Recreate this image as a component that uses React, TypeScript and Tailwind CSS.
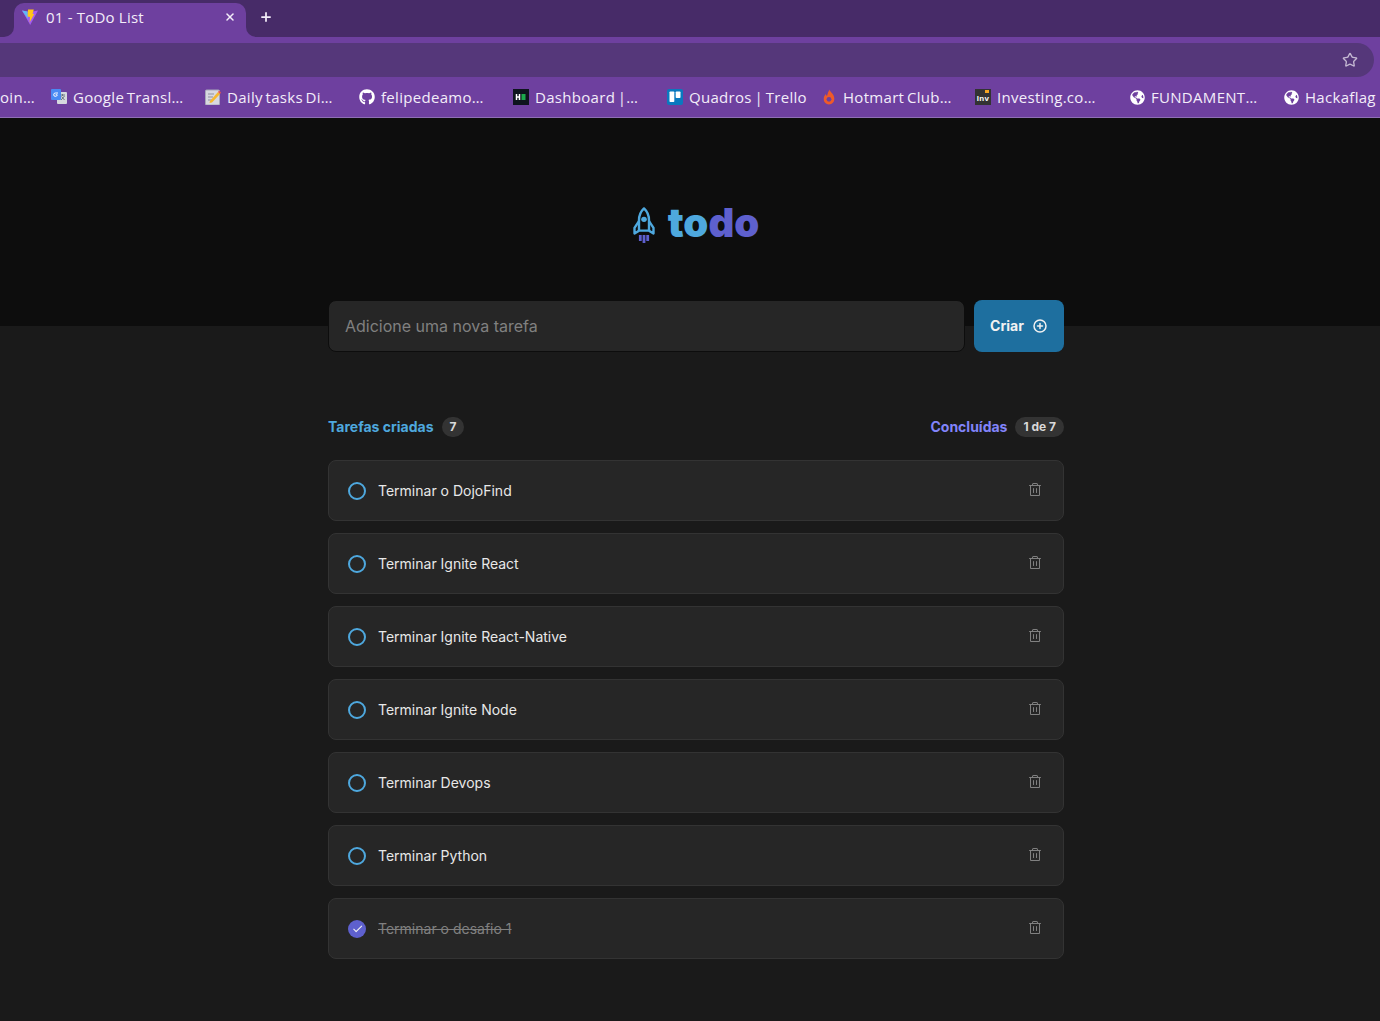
import { FaGithub, FaGlobeAmericas } from "react-icons/fa";
import { PiCheckBold, PiPlusCircleBold, PiTrash } from "react-icons/pi";
import { Star, Plus, X } from "lucide-react";

const tasks = [
  { title: "Terminar o DojoFind", done: false },
  { title: "Terminar Ignite React", done: false },
  { title: "Terminar Ignite React-Native", done: false },
  { title: "Terminar Ignite Node", done: false },
  { title: "Terminar Devops", done: false },
  { title: "Terminar Python", done: false },
  { title: "Terminar o desafio 1", done: true },
];

function ViteIcon() {
  return (
    <svg width="16" height="16" viewBox="0 0 16 16">
      <path d="M0 1.500 L8 3 L16 1.500 L8.200 16 Z" fill="#a45cf0" />
      <path d="M0 1.500 L5.500 2.500 L6 10 Z" fill="#5fb8f5" />
      <path d="M6 0.500 L11.800 0.500 L10.600 5 L12.200 5 L7.600 13.500 L8 8 L5.600 7.600 Z" fill="#ffc517" />
    </svg>
  );
}

function TranslateIcon() {
  return (
    <svg width="16" height="16" viewBox="0 0 16 16">
      <rect x="6" y="3" width="10" height="12" rx="1" fill="#d5d9de" />
      <path d="M9 6h5M11.500 5v2M10 11l3.500-4M10.500 7.500l3 3.500" stroke="#6b7280" strokeWidth="1" fill="none" />
      <rect x="0" y="0" width="10" height="11" rx="1" fill="#4a8af4" />
      <path d="M7 4H4.400a1.600 1.600 0 1 0 0 3.400c1 0 1.800-.5 1.800-1.600H4.600" stroke="#fff" strokeWidth="1" fill="none" />
    </svg>
  );
}

function NoteIcon() {
  return (
    <svg width="16" height="16" viewBox="0 0 16 16">
      <rect x="0.500" y="1" width="14" height="15" rx="1" fill="#d8d8e0" stroke="#a7a7b8" />
      <path d="M3 5h6M3 8h5M3 11h4" stroke="#8f8fa0" strokeWidth="1" />
      <path d="M5 12 L13 3 L15 5 L7 13.500 L4.500 14 Z" fill="#f5b82e" />
      <path d="M13 3 L14 1.500 L16 3.500 L15 5 Z" fill="#e4564e" />
    </svg>
  );
}

function HackIcon() {
  return (
    <svg width="16" height="16" viewBox="0 0 16 16">
      <rect width="16" height="16" fill="#0e141e" />
      <path d="M3.500 5v6M6.500 5v6M3.500 8h3" stroke="#fff" strokeWidth="1.500" />
      <rect x="8.500" y="5" width="4" height="6" fill="#1ba94c" />
    </svg>
  );
}

function TrelloIcon() {
  return (
    <svg width="16" height="16" viewBox="0 0 16 16">
      <rect width="16" height="16" rx="2" fill="#0a79bf" />
      <rect x="2.500" y="2.500" width="4.800" height="10.500" rx="0.800" fill="#fff" />
      <rect x="8.700" y="2.500" width="4.800" height="6.500" rx="0.800" fill="#fff" />
    </svg>
  );
}

function HotmartIcon() {
  return (
    <svg width="16" height="16" viewBox="0 0 16 16">
      <path d="M8.500 0.500c.3 2.400 4.800 4.300 4.800 9.200A5.400 5.400 0 0 1 8 15.500a5.400 5.400 0 0 1-5.300-5.800c0-2.300 1.200-3.700 2.200-4.800.1 1 .5 1.600 1.100 2C6.500 4.600 7.400 2.500 8.500 .5Z" fill="#ef5a29" />
      <circle cx="8" cy="10.300" r="2.400" fill="#6e409f" />
    </svg>
  );
}

function InvestingIcon() {
  return (
    <svg width="16" height="16" viewBox="0 0 16 16">
      <rect width="16" height="16" fill="#333" />
      <rect x="10" y="1" width="4" height="3" fill="#f5a623" />
      <text x="8" y="12" textAnchor="middle" fontSize="8" fontWeight="700" fill="#fff" fontFamily="'Liberation Sans', sans-serif">Inv</text>
    </svg>
  );
}

const bookmarks = [
  { label: "Google Transl", cut: true, icon: <TranslateIcon /> },
  { label: "Daily tasks Di", cut: true, icon: <NoteIcon /> },
  { label: "felipedeamo", cut: true, icon: <FaGithub size={16} color="#fff" /> },
  { label: "Dashboard |", cut: true, icon: <HackIcon /> },
  { label: "Quadros | Trello", cut: false, icon: <TrelloIcon /> },
  { label: "Hotmart Club", cut: true, icon: <HotmartIcon /> },
  { label: "Investing.co", cut: true, icon: <InvestingIcon /> },
  { label: "FUNDAMENT", cut: true, icon: <FaGlobeAmericas size={15} color="#fff" /> },
  { label: "Hackaflag", cut: false, icon: <FaGlobeAmericas size={15} color="#fff" /> },
];

function BrowserChrome() {
  return (
    <div className="bg-[#6e409f] font-['Open_Sans',sans-serif] text-[#f3edf9]">
      <div className="flex h-[37px] items-end bg-[#472b68]">
        <div className="h-full w-[14px] bg-[#6e409f]">
          <div className="h-full rounded-br-[10px] bg-[#472b68]" />
        </div>
        <div className="flex h-[34px] w-[232px] items-center rounded-t-[10px] bg-[#6e409f] pb-[6px] pl-[8px] pr-[10px]">
          <ViteIcon />
          <span className="ml-[8px] flex-1 text-[15px] tracking-[0.2px]">01 - ToDo List</span>
          <X size={12} strokeWidth={3} />
        </div>
        <div className="h-full flex-1 bg-[#6e409f]">
          <div className="flex h-full items-center rounded-bl-[10px] bg-[#472b68] pb-[3px] pl-[13px]">
            <Plus size={14} strokeWidth={3} />
          </div>
        </div>
      </div>
      <div className="pr-[6px] pt-[6px]">
        <div className="flex h-[34px] items-center justify-end rounded-r-[17px] bg-[#55377a] pr-[16px]">
          <Star size={16} strokeWidth={2} color="#c4b8d2" />
        </div>
      </div>
      <div className="flex h-[41px] items-center overflow-hidden border-b border-[#8f6fb5] text-[15px] tracking-[0.3px] [word-spacing:-1.5px]">
        <div className="w-[51px] shrink-0 whitespace-nowrap">
          oin<span className="tracking-[2px]">…</span>
        </div>
        {bookmarks.map((b) => (
          <div key={b.label} className="flex w-[154px] shrink-0 items-center gap-[6px]">
            <span className="flex w-4 shrink-0 justify-center">{b.icon}</span>
            <span className="whitespace-nowrap">
              {b.label}
              {b.cut && <span className="tracking-[2px]">…</span>}
            </span>
          </div>
        ))}
      </div>
    </div>
  );
}

function Logo() {
  return (
    <div className="flex items-center gap-[13px]">
      <svg width="22" height="36" viewBox="0 0 22 38" fill="none" preserveAspectRatio="none" className="mt-[2px]">
        <path d="M11 1.500C7 5.500 6 10 6 14v11h10V14c0-4-1-8.500-5-12.500Z" stroke="#4ea8de" strokeWidth="2.400" strokeLinejoin="round" />
        <circle cx="11" cy="13" r="2.800" fill="#4ea8de" />
        <path d="M6 15 1.500 22v6L6 25M16 15l4.500 7v6L16 25" stroke="#4ea8de" strokeWidth="2.400" strokeLinejoin="round" />
        <path d="M7.300 29.500v6.500M11 29.500v8.500M14.700 29.500v6.500" stroke="#5e60ce" strokeWidth="2.800" />
      </svg>
      <span className="-mt-[2px] font-['Inter',sans-serif] text-[40px] font-black leading-none">
        <span className="text-[#4ea8de]">to</span>
        <span className="text-[#5e60ce]">do</span>
      </span>
    </div>
  );
}

function TaskRow({ title, done }: { title: string; done: boolean }) {
  return (
    <div className="flex h-[61px] items-center rounded-lg border border-[#333333] bg-[#262626] pl-[19px] pr-[20px]">
      {done ? (
        <span className="flex h-[18px] w-[18px] items-center justify-center rounded-full bg-[#5e60ce]">
          <PiCheckBold size={11} color="#f2f2f2" />
        </span>
      ) : (
        <span className="h-[18px] w-[18px] rounded-full border-2 border-[#4ea8de]" />
      )}
      <span className={done ? "ml-[12px] flex-1 text-sm text-[#808080] line-through" : "ml-[12px] flex-1 text-sm text-[#e8e8e8]"}>
        {title}
      </span>
      <PiTrash size={16} color="#808080" className="-mt-[2px]" />
    </div>
  );
}

export default function App() {
  return (
    <div className="h-[1021px] overflow-hidden bg-[#1a1a1a] font-['Inter',sans-serif]">
      <BrowserChrome />
      <header className="flex h-[208px] justify-center bg-[#0d0d0d] pl-[12px] pt-[87px]">
        <div className="h-fit">
          <Logo />
        </div>
      </header>
      <main className="-mt-[26px] ml-[328px] w-[736px]">
        <form className="flex gap-[9px]">
          <input
            placeholder="Adicione uma nova tarefa"
            className="h-[52px] flex-1 rounded-lg border border-[#0d0d0d] bg-[#262626] px-4 text-base text-[#f2f2f2] placeholder:text-[#808080] outline-none"
          />
          <button type="button" className="flex h-[52px] w-[90px] items-center justify-center gap-2 rounded-lg bg-[#1e6f9f] text-sm font-bold text-[#f2f2f2]">
            Criar <PiPlusCircleBold size={16} />
          </button>
        </form>
        <div className="mt-[65px] flex items-center justify-between">
          <div className="flex items-center gap-2">
            <strong className="text-sm font-bold text-[#4ea8de]">Tarefas criadas</strong>
            <span className="rounded-full bg-[#333333] px-2 py-[2px] text-xs font-bold text-[#d9d9d9]">7</span>
          </div>
          <div className="flex items-center gap-2">
            <strong className="text-sm font-bold text-[#8284fa]">Concluídas</strong>
            <span className="rounded-full bg-[#333333] px-2 py-[2px] text-xs font-bold text-[#d9d9d9]">1 de 7</span>
          </div>
        </div>
        <div className="mt-[23px] flex flex-col gap-3">
          {tasks.map((t) => (
            <TaskRow key={t.title} title={t.title} done={t.done} />
          ))}
        </div>
      </main>
    </div>
  );
}
